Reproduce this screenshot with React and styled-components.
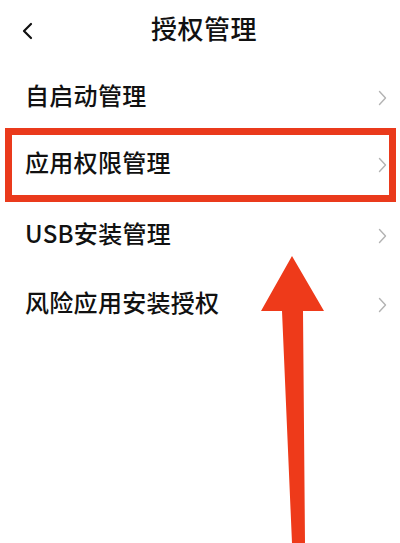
import styled, { createGlobalStyle } from 'styled-components'

const GlobalStyle = createGlobalStyle`
    html, body {
        margin: 0;
        padding: 0;
        background: #fff;
    }
    body {
        font-family: 'Noto Sans CJK SC', 'Noto Sans', sans-serif;
    }
`

const items = [
    { label: '自启动管理' },
    { label: '应用权限管理', marked: true },
    { label: 'USB安装管理' },
    { label: '风险应用安装授权' },
]

function Chevron({ back }) {
    if (back) {
        return (
            <svg width="12" height="18" viewBox="0 0 12 18">
                <path d="M10 2 L3 9 L10 16" fill="none" stroke="#111" strokeWidth="2.2" strokeLinecap="round" strokeLinejoin="round" />
            </svg>
        )
    }
    return (
        <svg width="9" height="16" viewBox="0 0 9 16">
            <path d="M1.5 1.5 L7.5 8 L1.5 14.5" fill="none" stroke="#b3b3b3" strokeWidth="1.4" strokeLinecap="round" strokeLinejoin="round" />
        </svg>
    )
}

function App() {
    return (
        <Page>
            <GlobalStyle />
            <Header>
                <BackButton>
                    <Chevron back />
                </BackButton>
                <Title>授权管理</Title>
            </Header>
            <List>
                {items.map((item) => (
                    <Row key={item.label} $marked={item.marked}>
                        <Label>{item.label}</Label>
                        <Chevron />
                    </Row>
                ))}
            </List>
            <Arrow viewBox="0 0 400 543" width="400" height="543">
                <polygon points="292,256 261,311 282,311 292,543 305,543 303,311 324,311" fill="#ee3a1a" />
            </Arrow>
        </Page>
    )
}

export default App

const Page = styled.div`
    position: relative;
    width: 400px;
    height: 543px;
    overflow: hidden;
    background: #fff;
`

const Header = styled.div`
    position: relative;
    display: flex;
    align-items: center;
    justify-content: center;
    height: 63px;
    padding-bottom: 7px;
    box-sizing: border-box;
`

const BackButton = styled.div`
    position: absolute;
    left: 21px;
    top: 22px;
    display: flex;
`

const Title = styled.h1`
    margin: 0 0 0 8px;
    font-size: 26px;
    font-weight: 500;
    line-height: 1.2;
    color: #111;
    letter-spacing: 0.5px;
`

const List = styled.div`
    display: flex;
    flex-direction: column;
`

const Row = styled.div`
    display: flex;
    align-items: center;
    justify-content: space-between;
    height: 69px;
    box-sizing: border-box;
    padding: 0 13px 0 25px;
    ${({ $marked }) =>
        $marked &&
        `
        height: 74px;
        margin: -4px 4px -1px 5px;
        border: 7px solid #ea3a1c;
        padding: 0 2px 0 13px;
    `}
`

const Label = styled.span`
    font-size: 24px;
    font-weight: 500;
    line-height: 1.2;
    color: #111;
    letter-spacing: 0.3px;
    margin-bottom: 5px;
`

const Arrow = styled.svg`
    position: absolute;
    left: 0;
    top: 0;
    pointer-events: none;
`
